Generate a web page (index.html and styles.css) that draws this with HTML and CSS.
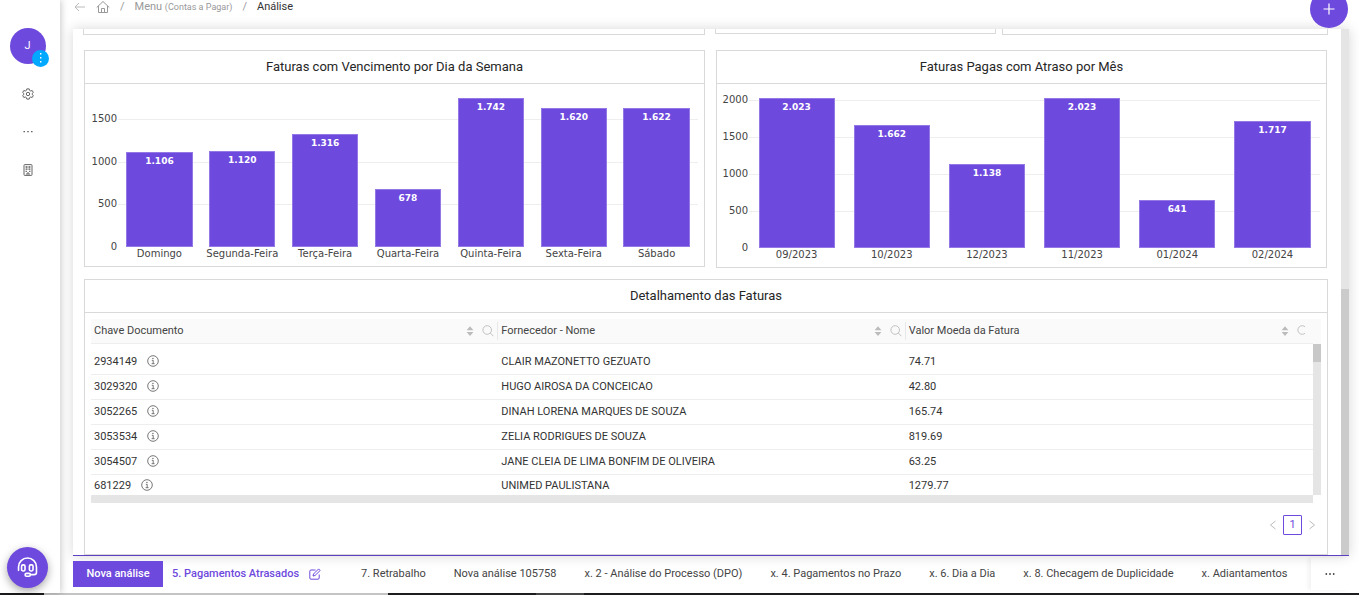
FILE: index.html
```html
<!DOCTYPE html>
<html lang="pt-BR">
<head>
<meta charset="utf-8">
<meta name="viewport" content="width=device-width, initial-scale=1">
<title>Análise</title>
<link rel="stylesheet" href="styles.css">
</head>
<body>
<svg class="defs" aria-hidden="true">
  <symbol id="info" viewBox="0 0 12 12"><g fill="none" stroke="currentColor"><circle cx="6" cy="6" r="5.3" stroke-width=".8"/><path d="M4.8 5.3H6.2V8.600M4.600 8.700H7.600" stroke-width=".8"/></g><rect x="5.400" y="2.900" width="1.100" height="1.100" fill="currentColor"/></symbol>
  <symbol id="search" viewBox="0 0 12 12"><g fill="none" stroke="currentColor" stroke-width=".9"><circle cx="5.200" cy="5" r="4.300"/><path d="M8.300 8.100L11.400 11.200"/></g></symbol>
  <symbol id="sort" viewBox="0 0 8 12"><path d="M4 1.200L7.400 5.200H.6zM4 11L.6 7h6.800z" fill="currentColor"/></symbol>
</svg>
<div class="app">
  <nav class="sidebar" aria-label="Principal">
    <button class="avatar" aria-label="Perfil">J<span class="badge"><svg viewBox="0 0 17 17"><path d="M8 3h1.400v1.400H8zM8 7h1.400v1.400H8zM8 11h1.400v1.400H8z" fill="#fff"/></svg></span></button>
    <button class="side-btn" aria-label="Configurações"><svg viewBox="0 0 12 12" fill="none" stroke="currentColor" stroke-width=".9" stroke-linejoin="round"><path d="M4.800 .9h2.400l.4 1.500 1.100.6 1.500-.5 1.100 2-1.100 1v1l1.100 1-1.100 2-1.500-.5-1.100.6-.4 1.500H4.800l-.4-1.500-1.100-.6-1.500.5-1.100-2 1.100-1v-1l-1.100-1 1.100-2 1.500.5 1.100-.6z"/><circle cx="6" cy="6" r="1.700"/></svg></button>
    <button class="side-btn" aria-label="Mais"><svg viewBox="0 0 12 12" fill="currentColor"><path d="M1.500 5h1.400v1.200H1.500zM5.300 5h1.400v1.200H5.300zM9.100 5h1.400v1.200H9.100z"/></svg></button>
    <button class="side-btn" aria-label="Empresa"><svg viewBox="0 0 12 12" fill="none" stroke="currentColor"><rect x="2" y=".6" width="8" height="10.800" rx=".8" stroke-width=".9"/><path d="M5 11V9h2v2" stroke-width=".9"/><path d="M3.600 3h1.900M6.500 3h1.900M3.600 5.200h1.900M6.500 5.200h1.900M3.600 7.400h1.200M7.200 7.400h1.200" stroke-width="1.300"/></svg></button>
    <button class="support" aria-label="Suporte"><svg viewBox="0 0 22 22" fill="none" stroke="#fff" stroke-width="1.700" stroke-linecap="round"><path d="M1.600 14V10.500a9.400 9.400 0 0 1 18.800 0V16a2.500 2.500 0 0 1-2.500 2.500H14.500"/><rect x="4.800" y="8.200" width="3.600" height="6.400" rx="1.600"/><rect x="13" y="8.200" width="3.800" height="6.400" rx="1.400"/><rect x="8.500" y="17.200" width="5.500" height="3" rx="1.500"/></svg></button>
  </nav>
  <main class="main">
    <header class="topbar">
      <nav class="crumbs" aria-label="Trilha">
        <a href="#" aria-label="Voltar"><svg class="back" viewBox="0 0 12 12" fill="none" stroke="currentColor"><path d="M5 2L1 6l4 4M1 6h10"/></svg></a>
        <a href="#" aria-label="Início"><svg class="home" viewBox="0 0 14 14" fill="none" stroke="currentColor"><path d="M.7 7.500L7 1.500l6.300 6M2.500 6v6.500h9V6M5.500 12.500v-4h3v4"/></svg></a>
        <span>/</span><a href="#">Menu <small>(Contas a Pagar)</small></a><span>/</span><a class="current" href="#">Análise</a>
      </nav>
      <button class="add" aria-label="Adicionar"><svg viewBox="0 0 12 12" stroke="#fff" stroke-width="1.200"><path d="M6 .5v11M.5 6h11"/></svg></button>
    </header>
    <div class="panel">
      <div class="board">
        <div class="row-above"><div class="stub"></div><div class="stub mid"></div><div class="stub"></div></div>
        <div class="charts" id="charts"></div>
        <section class="card detail">
          <h2>Detalhamento das Faturas</h2>
          <div class="grid">
            <div class="grid-main">
              <table>
                <thead><tr>
                  <th><div class="th">Chave Documento<span class="tools"><svg class="sort"><use href="#sort"/></svg><svg class="search"><use href="#search"/></svg></span></div></th>
                  <th><div class="th">Fornecedor - Nome<span class="tools"><svg class="sort"><use href="#sort"/></svg><svg class="search"><use href="#search"/></svg></span></div></th>
                  <th><div class="th">Valor Moeda da Fatura<span class="tools"><svg class="sort"><use href="#sort"/></svg><svg class="search cut"><use href="#search" width="12" height="12"/></svg></span></div></th>
                </tr></thead>
                <tbody>
                  <tr><td>2934149<svg class="info"><use href="#info"/></svg></td><td>CLAIR MAZONETTO GEZUATO</td><td>74.71</td></tr>
                  <tr><td>3029320<svg class="info"><use href="#info"/></svg></td><td>HUGO AIROSA DA CONCEICAO</td><td>42.80</td></tr>
                  <tr><td>3052265<svg class="info"><use href="#info"/></svg></td><td>DINAH LORENA MARQUES DE SOUZA</td><td>165.74</td></tr>
                  <tr><td>3053534<svg class="info"><use href="#info"/></svg></td><td>ZELIA RODRIGUES DE SOUZA</td><td>819.69</td></tr>
                  <tr><td>3054507<svg class="info"><use href="#info"/></svg></td><td>JANE CLEIA DE LIMA BONFIM DE OLIVEIRA</td><td>63.25</td></tr>
                  <tr><td>681229<svg class="info"><use href="#info"/></svg></td><td>UNIMED PAULISTANA</td><td>1279.77</td></tr>
                </tbody>
              </table>
              <div class="hscroll"></div>
            </div>
            <div class="vscroll"><div class="vtrack"><div class="vthumb"></div></div></div>
          </div>
          <nav class="pager" aria-label="Paginação">
            <button aria-label="Anterior"><svg viewBox="0 0 8 10" fill="none" stroke="currentColor"><path d="M6.500 1L1.500 5l5 4"/></svg></button>
            <button class="page">1</button>
            <button aria-label="Próxima"><svg viewBox="0 0 8 10" fill="none" stroke="currentColor"><path d="M1.500 1l5 4-5 4"/></svg></button>
          </nav>
        </section>
      </div>
      <div class="scrollbar"><div class="thumb"></div></div>
    </div>
    <footer class="tabs">
      <button class="new">Nova análise</button>
      <a class="active" href="#">5. Pagamentos Atrasados<svg viewBox="0 0 12 12" fill="none" stroke="currentColor"><path d="M6.500 2H2A1.200 1.200 0 0 0 .8 3.200V10A1.200 1.200 0 0 0 2 11.200h7A1.200 1.200 0 0 0 10.200 10V6.500M4 8l.5-2L9.600.9l1.600 1.600L6 7.500z"/></svg></a>
      <a href="#">7. Retrabalho</a>
      <a href="#">Nova análise 105758</a>
      <a href="#">x. 2 - Análise do Processo (DPO)</a>
      <a href="#">x. 4. Pagamentos no Prazo</a>
      <a href="#">x. 6. Dia a Dia</a>
      <a href="#">x. 8. Checagem de Duplicidade</a>
      <a href="#">x. Adiantamentos</a>
      <button class="more" aria-label="Mais abas"><svg viewBox="0 0 10 4" fill="currentColor"><circle cx="1.300" cy="2" r=".9"/><circle cx="5" cy="2" r=".9"/><circle cx="8.700" cy="2" r=".9"/></svg></button>
    </footer>
  </main>
</div>
<div class="strip"></div>
<script src="charts.js"></script>
</body>
</html>
```
FILE: styles.css
```css
* { box-sizing: border-box; }
body { margin: 0; height: 100vh; display: flex; flex-direction: column; overflow: hidden; background: #fff; color: #444; font: 11px/16px Roboto, "Open Sans", sans-serif; }
button { padding: 0; border: 0; background: none; font: inherit; color: inherit; cursor: pointer; }
a { color: inherit; text-decoration: none; }
svg { display: block; }
.defs { position: absolute; width: 0; height: 0; }
.app { flex: 1; display: flex; min-height: 0; }

.sidebar { width: 60px; flex: none; z-index: 1; display: flex; flex-direction: column; align-items: center; gap: 26px; padding: 28px 5px 5px 0; background: #fff; box-shadow: 1px 0 7px rgba(0,0,0,.22); }
.avatar { position: relative; width: 36px; height: 36px; margin-bottom: -2px; border-radius: 50%; background: #6e49dd; color: #fff; }
.badge { position: absolute; right: -3px; bottom: -3px; width: 17px; height: 17px; border-radius: 50%; background: #00a8ff; }
.side-btn { width: 12px; height: 12px; color: #555; }
.support { width: 41px; height: 41px; margin-top: auto; display: grid; place-items: center; border-radius: 50%; background: #6e49dd; box-shadow: 0 3px 8px rgba(0,0,0,.35); }
.support svg { width: 21px; height: 21px; }

.main { flex: 1; min-width: 0; display: flex; flex-direction: column; padding: 0 10px 0 13px; }
.topbar { height: 29px; flex: none; display: flex; justify-content: space-between; align-items: flex-start; }
.crumbs { display: flex; align-items: center; height: 14px; gap: 10px; padding-left: 1px; color: #999; }
.crumbs small { font-size: 9px; }
.crumbs .current { color: #333; }
.back { width: 12px; height: 12px; color: #bbb; }
.home { width: 14px; height: 14px; }
.add { z-index: 1; width: 38px; height: 38px; margin: -10px 1px 0 0; display: grid; place-items: center; border-radius: 50%; background: #6e49dd; }
.add svg { width: 12px; height: 12px; }

.panel { flex: 1; min-height: 0; display: flex; background: #fff; border-bottom: 1px solid #5f3fc4; box-shadow: 0 0 12px rgba(0,0,0,.16); }
.board { flex: 1; min-width: 0; display: flex; flex-direction: column; padding: 0 13px 0 11px; }
.row-above { display: grid; grid-template-columns: 622fr 285fr 326fr; gap: 6px; height: 6px; flex: none; margin-left: -1px; }
.stub { border: 1px solid #d9d9d9; border-top: 0; }
.stub.mid { height: 5px; margin-left: 4px; }
.charts { display: grid; grid-template-columns: 621fr 611fr; align-items: start; gap: 11px; margin: 15px 1px 0 0; }
.card { border: 1px solid #d9d9d9; background: #fff; }
.card h2 { margin: 0; height: 33px; border-bottom: 1px solid #d9d9d9; text-align: center; font-size: 13px; line-height: 32px; font-weight: 400; color: #262626; }

.chart { --plot: 149px; display: grid; grid-template-columns: 33px 1fr; padding: 14px 6px 5px 0; font: 10px/14px "DejaVu Sans", sans-serif; color: #444; }
.card:nth-child(2) .chart { --plot: 150px; grid-template-columns: 32px 1fr; }
.axis, .lines, .bars { height: var(--plot); }
.axis { display: flex; flex-direction: column-reverse; padding-right: 1px; }
.axis span { flex: none; display: flex; justify-content: flex-end; align-items: flex-end; }
.axis i { font-style: normal; margin-bottom: -7px; }
.plot { display: grid; }
.lines { grid-area: 1 / 1; display: flex; flex-direction: column-reverse; }
.lines span { flex: none; border-top: 1px solid #eee; }
.bars { grid-area: 1 / 1; display: flex; align-items: flex-end; }
.slot { flex: 1; height: 100%; display: flex; flex-direction: column; justify-content: flex-end; align-items: center; }
.bar { width: 80%; padding-top: 1px; background: #6e49dd; border: 1px solid #9479e6; color: #fff; font-size: 9px; font-weight: 700; text-align: center; }
.names { display: flex; grid-column: 2; }
.names span { flex: 1; width: 0; white-space: nowrap; display: flex; justify-content: center; }

.detail { flex: 1; min-height: 0; margin-top: 11px; }
.grid { display: flex; margin: 6px 6px 0; }
.grid-main { flex: 1; min-width: 0; }
table { width: 100%; border-collapse: separate; border-spacing: 0; table-layout: fixed; }
th { height: 25px; padding: 0; text-align: left; font-weight: 400; background: #fafafa; border-bottom: 1px solid #eee; }
.th { display: flex; align-items: center; justify-content: space-between; height: 18px; padding: 0 3px; border-right: 1px solid #e8e8e8; }
th:last-child .th { border: 0; padding-right: 8px; }
.tools { display: flex; align-items: center; gap: 8px; color: #bbb; }
.sort { width: 8px; height: 12px; }
.search { width: 12px; height: 12px; }
.search.cut { width: 8px; overflow: hidden; }
td { height: 25px; padding: 0 3px; border-bottom: 1px solid #eee; color: #333; }
tbody tr:first-child td { height: 31px; padding-top: 6px; }
tbody tr:last-child td { height: 20px; border: 0; padding-top: 2px; }
.info { display: inline-block; width: 12px; height: 12px; margin-left: 10px; vertical-align: -2px; color: #555; }
td { line-height: 14px; }
.hscroll { height: 8px; background: #e5e5e5; border-radius: 1px 0 0 1px; }
.vscroll { width: 8px; display: flex; flex-direction: column; padding: 25px 0 8px; background: linear-gradient(#fafafa 25px, #fff 25px); }
.vtrack { flex: 1; background: #e5e5e5; }
.vthumb { height: 18px; background: #c8c8c8; }
.pager { display: flex; justify-content: flex-end; align-items: center; gap: 6px; padding: 12px 11px 0; color: #bbb; }
.pager svg { width: 8px; height: 10px; }
.page { width: 19px; height: 20px; border: 1px solid #6e49dd; border-radius: 1px; color: #6e49dd; }
.scrollbar { width: 8px; display: flex; flex-direction: column; justify-content: flex-end; background: #e5e5e5; }
.thumb { height: 50.500%; background: #cbcbcb; }

.tabs { height: 37px; flex: none; display: flex; align-items: center; padding-bottom: 2px; white-space: nowrap; }
.tabs a { margin-right: 28px; }
.tabs .new { width: 90px; height: 26px; flex: none; margin-right: 9px; background: #6e49dd; color: #fff; font-weight: 500; }
.tabs .active { display: flex; align-items: center; gap: 10px; margin-right: 40px; color: #6e49dd; font-weight: 500; }
.tabs a:last-of-type { margin-right: 0; }
.active svg { width: 12px; height: 12px; }
.more { width: 38px; height: 32px; margin-left: auto; display: grid; place-items: center; box-shadow: -3px 0 4px rgba(0,0,0,.05); }
.more svg { width: 10px; height: 4px; }
.strip { height: 2px; flex: none; background: linear-gradient(90deg, #1d1d1f 44px, #c4c4c4 44px 388px, #1d1d1f 388px 536px, #444 536px 584px, #1d1d1f 584px); }
```
FILE: charts.js
```js
const charts = [
  { title: "Faturas com Vencimento por Dia da Semana", ticks: [0, 500, 1000, 1500],
    data: [["Domingo", 1106], ["Segunda-Feira", 1120], ["Terça-Feira", 1316], ["Quarta-Feira", 678], ["Quinta-Feira", 1742], ["Sexta-Feira", 1620], ["Sábado", 1622]] },
  { title: "Faturas Pagas com Atraso por Mês", ticks: [0, 500, 1000, 1500, 2000],
    data: [["09/2023", 2023], ["10/2023", 1662], ["12/2023", 1138], ["11/2023", 2023], ["01/2024", 641], ["02/2024", 1717]] }
];
const format = n => n >= 1000 ? Math.floor(n / 1000) + "." + String(n % 1000).padStart(3, "0") : String(n);
document.getElementById("charts").innerHTML = charts.map(c => {
  const max = Math.max(...c.data.map(d => d[1]));
  const pct = v => (v / max * 100).toFixed(2) + "%";
  const step = c.ticks[1];
  // Each label sits on the lower edge of the interval above it; the top one has no interval.
  const axis = c.ticks.map((t, i) => `<span style="height:${i < c.ticks.length - 1 ? pct(step) : 0}"><i>${t}</i></span>`).join("");
  return `<section class="card"><h2>${c.title}</h2><div class="chart">
    <div class="axis">${axis}</div>
    <div class="plot"><div class="lines">${c.ticks.slice(1).map(() => `<span style="height:${pct(step)}"></span>`).join("")}</div>
    <div class="bars">${c.data.map(d => `<div class="slot"><div class="bar" style="height:${pct(d[1])}">${format(d[1])}</div></div>`).join("")}</div></div>
    <div class="names">${c.data.map(d => `<span>${d[0]}</span>`).join("")}</div>
  </div></section>`;
}).join("");
```
